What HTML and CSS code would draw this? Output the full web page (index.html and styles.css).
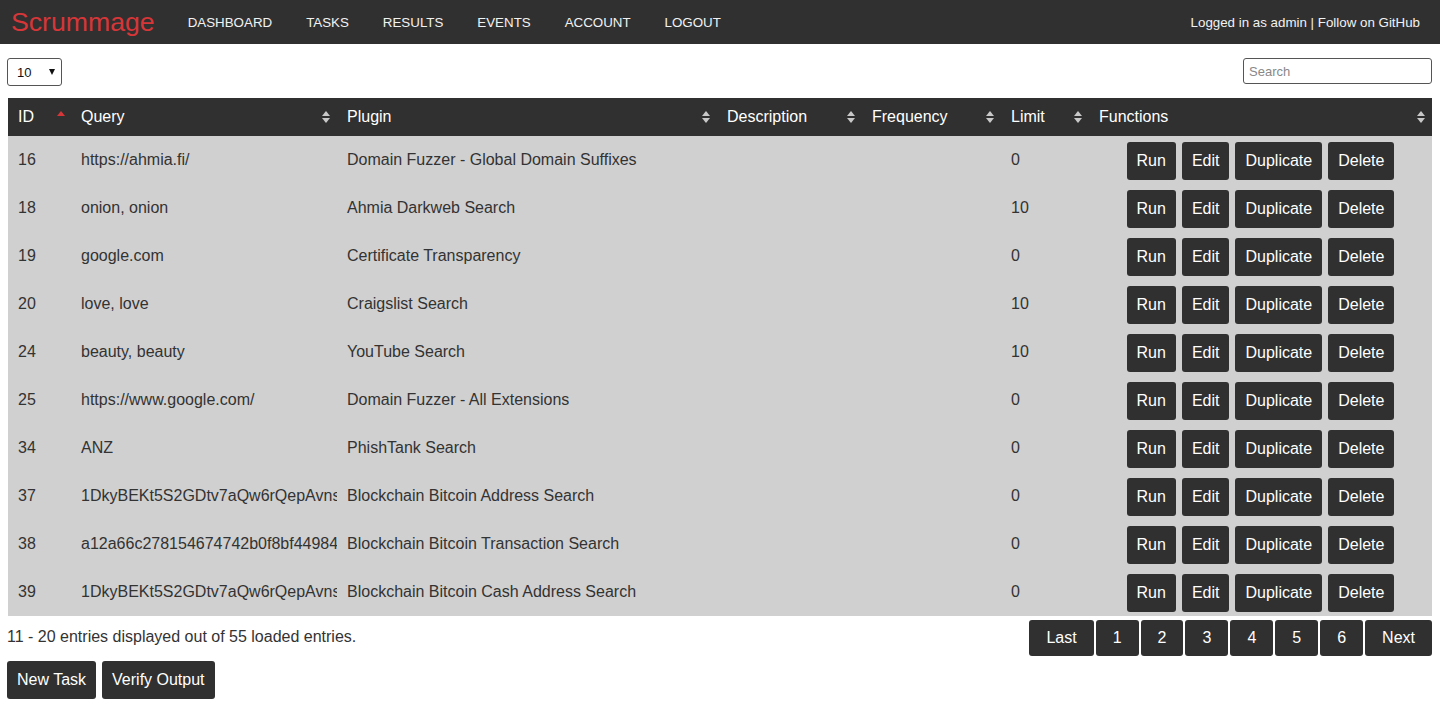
FILE: index.html
```html
<!DOCTYPE html>
<html lang="en">
<head>
<meta charset="utf-8">
<title>Scrummage - Tasks</title>
<link rel="stylesheet" href="styles.css">
</head>
<body>
<header class="topbar">
  <div class="brand">Scrummage</div>
  <nav class="menu">
    <a href="#">DASHBOARD</a>
    <a href="#">TASKS</a>
    <a href="#">RESULTS</a>
    <a href="#">EVENTS</a>
    <a href="#">ACCOUNT</a>
    <a href="#">LOGOUT</a>
  </nav>
  <div class="userinfo">Logged in as admin | Follow on GitHub</div>
</header>

<main class="content">
  <div class="controls">
    <div class="select-wrap">
      <select class="page-size">
        <option>10</option>
        <option>25</option>
        <option>50</option>
      </select>
      <span class="select-arrow"></span>
    </div>
    <input class="search" type="text" placeholder="Search">
  </div>

  <table class="tasks">
    <colgroup>
      <col class="c-id"><col class="c-query"><col class="c-plugin"><col class="c-desc"><col class="c-freq"><col class="c-limit"><col class="c-func">
    </colgroup>
    <thead>
      <tr>
        <th><span>ID</span><span class="sort asc"></span></th>
        <th><span>Query</span><span class="sort"></span></th>
        <th><span>Plugin</span><span class="sort"></span></th>
        <th><span>Description</span><span class="sort"></span></th>
        <th><span>Frequency</span><span class="sort"></span></th>
        <th><span>Limit</span><span class="sort"></span></th>
        <th><span>Functions</span><span class="sort"></span></th>
      </tr>
    </thead>
    <tbody>
      <tr><td>16</td><td>https://ahmia.fi/</td><td>Domain Fuzzer - Global Domain Suffixes</td><td></td><td></td><td>0</td><td><div class="actions"><button class="btn">Run</button><button class="btn">Edit</button><button class="btn">Duplicate</button><button class="btn">Delete</button></div></td></tr>
      <tr><td>18</td><td>onion, onion</td><td>Ahmia Darkweb Search</td><td></td><td></td><td>10</td><td><div class="actions"><button class="btn">Run</button><button class="btn">Edit</button><button class="btn">Duplicate</button><button class="btn">Delete</button></div></td></tr>
      <tr><td>19</td><td>google.com</td><td>Certificate Transparency</td><td></td><td></td><td>0</td><td><div class="actions"><button class="btn">Run</button><button class="btn">Edit</button><button class="btn">Duplicate</button><button class="btn">Delete</button></div></td></tr>
      <tr><td>20</td><td>love, love</td><td>Craigslist Search</td><td></td><td></td><td>10</td><td><div class="actions"><button class="btn">Run</button><button class="btn">Edit</button><button class="btn">Duplicate</button><button class="btn">Delete</button></div></td></tr>
      <tr><td>24</td><td>beauty, beauty</td><td>YouTube Search</td><td></td><td></td><td>10</td><td><div class="actions"><button class="btn">Run</button><button class="btn">Edit</button><button class="btn">Duplicate</button><button class="btn">Delete</button></div></td></tr>
      <tr><td>25</td><td>https://www.google.com/</td><td>Domain Fuzzer - All Extensions</td><td></td><td></td><td>0</td><td><div class="actions"><button class="btn">Run</button><button class="btn">Edit</button><button class="btn">Duplicate</button><button class="btn">Delete</button></div></td></tr>
      <tr><td>34</td><td>ANZ</td><td>PhishTank Search</td><td></td><td></td><td>0</td><td><div class="actions"><button class="btn">Run</button><button class="btn">Edit</button><button class="btn">Duplicate</button><button class="btn">Delete</button></div></td></tr>
      <tr><td>37</td><td class="clip">1DkyBEKt5S2GDtv7aQw6rQepAvnsRyHoYM</td><td>Blockchain Bitcoin Address Search</td><td></td><td></td><td>0</td><td><div class="actions"><button class="btn">Run</button><button class="btn">Edit</button><button class="btn">Duplicate</button><button class="btn">Delete</button></div></td></tr>
      <tr><td>38</td><td class="clip">a12a66c278154674742b0f8bf44984f0c8b1fa4c</td><td>Blockchain Bitcoin Transaction Search</td><td></td><td></td><td>0</td><td><div class="actions"><button class="btn">Run</button><button class="btn">Edit</button><button class="btn">Duplicate</button><button class="btn">Delete</button></div></td></tr>
      <tr><td>39</td><td class="clip">1DkyBEKt5S2GDtv7aQw6rQepAvnsRyHoYM</td><td>Blockchain Bitcoin Cash Address Search</td><td></td><td></td><td>0</td><td><div class="actions"><button class="btn">Run</button><button class="btn">Edit</button><button class="btn">Duplicate</button><button class="btn">Delete</button></div></td></tr>
    </tbody>
  </table>

  <div class="footer-row">
    <div class="info">11 - 20 entries displayed out of 55 loaded entries.</div>
    <div class="pager">
      <button class="pbtn">Last</button>
      <button class="pbtn">1</button>
      <button class="pbtn">2</button>
      <button class="pbtn">3</button>
      <button class="pbtn">4</button>
      <button class="pbtn">5</button>
      <button class="pbtn">6</button>
      <button class="pbtn">Next</button>
    </div>
  </div>

  <div class="bottom-actions">
    <button class="btn">New Task</button>
    <button class="btn">Verify Output</button>
  </div>
</main>
</body>
</html>
```

FILE: styles.css
```css
* { box-sizing: border-box; }

body {
  margin: 0;
  font-family: "Liberation Sans", Arial, sans-serif;
  color: #333;
  background: #fff;
}

.topbar {
  height: 44px;
  background: #303030;
  display: flex;
  align-items: center;
  padding: 0 20px 0 11px;
}

.brand {
  color: #d63638;
  font-size: 26.67px;
  line-height: 30px;
  margin-right: 16px;
}

.menu {
  display: flex;
  flex: 1;
}

.menu a {
  color: #f2f2f2;
  text-decoration: none;
  font-size: 13.33px;
  padding: 0 17px;
  line-height: 44px;
  padding-top: 1px;
}

.userinfo {
  color: #f2f2f2;
  font-size: 13.33px;
}

.content {
  padding: 0 8px 0 7px;
}

.controls {
  display: flex;
  justify-content: space-between;
  align-items: flex-start;
  margin-top: 14px;
  height: 40px;
}

.select-wrap {
  position: relative;
  width: 55px;
  height: 28px;
}

.page-size {
  appearance: none;
  -webkit-appearance: none;
  width: 55px;
  height: 28px;
  border: 1px solid #555;
  border-radius: 3px;
  background: #fff;
  font-family: "Liberation Sans", Arial, sans-serif;
  font-size: 13px;
  color: #111;
  padding: 0 0 0 9px;
}

.select-arrow {
  position: absolute;
  right: 7px;
  top: 11px;
  width: 0;
  height: 0;
  border-left: 3px solid transparent;
  border-right: 3px solid transparent;
  border-top: 6px solid #111;
  pointer-events: none;
}

.search {
  width: 189px;
  height: 26px;
  border: 1px solid #555;
  border-radius: 3px;
  font-family: "Liberation Sans", Arial, sans-serif;
  font-size: 13px;
  padding: 0 5px;
}

.search::placeholder { color: #888; }

.tasks {
  width: 1424px;
  margin-left: 1px;
  table-layout: fixed;
  border-collapse: collapse;
  font-size: 16px;
}

.c-id { width: 63px; }
.c-query { width: 266px; }
.c-plugin { width: 380px; }
.c-desc { width: 145px; }
.c-freq { width: 139px; }
.c-limit { width: 88px; }
.c-func { width: 343px; }

.tasks thead th {
  background: #303030;
  color: #fff;
  font-weight: normal;
  text-align: left;
  height: 38px;
  padding: 0 10px;
  position: relative;
}

.sort {
  position: absolute;
  right: 7px;
  top: 13px;
  width: 8px;
  height: 12px;
}

.sort::before,
.sort::after {
  content: "";
  position: absolute;
  left: 0;
  border-left: 4px solid transparent;
  border-right: 4px solid transparent;
}

.sort::before {
  top: 0;
  border-bottom: 5px solid #c8c8c8;
}

.sort::after {
  bottom: 0;
  border-top: 5px solid #c8c8c8;
}

.sort.asc { right: 6px; }
.sort.asc::before { border-bottom-color: #d63638; }
.sort.asc::after { display: none; }

.tasks tbody td {
  background: #d0d0d0;
  height: 48px;
  padding: 0 10px;
  white-space: nowrap;
  overflow: hidden;
  vertical-align: middle;
  color: #333;
}

.tasks tbody td.clip { padding-right: 0; }

.tasks tbody td:last-child { padding: 0; }

.actions {
  display: flex;
  justify-content: center;
  gap: 6px;
  padding-top: 2px;
}

.btn {
  background: #303030;
  color: #fff;
  border: none;
  border-radius: 3px;
  font-family: "Liberation Sans", Arial, sans-serif;
  font-size: 16px;
  line-height: 18px;
  padding: 10px 10px;
  height: 38px;
  cursor: pointer;
}

.footer-row {
  display: flex;
  justify-content: space-between;
  align-items: center;
  margin-top: 4px;
}

.info {
  font-size: 16px;
  color: #333;
  margin-top: -3px;
}

.pager {
  display: flex;
  gap: 2px;
}

.pbtn {
  background: #303030;
  color: #fff;
  border: none;
  border-radius: 3px;
  font-family: "Liberation Sans", Arial, sans-serif;
  font-size: 16px;
  height: 36px;
  padding: 0 17px;
  cursor: pointer;
}

.bottom-actions {
  display: flex;
  gap: 6px;
  margin-top: 5px;
}
```
